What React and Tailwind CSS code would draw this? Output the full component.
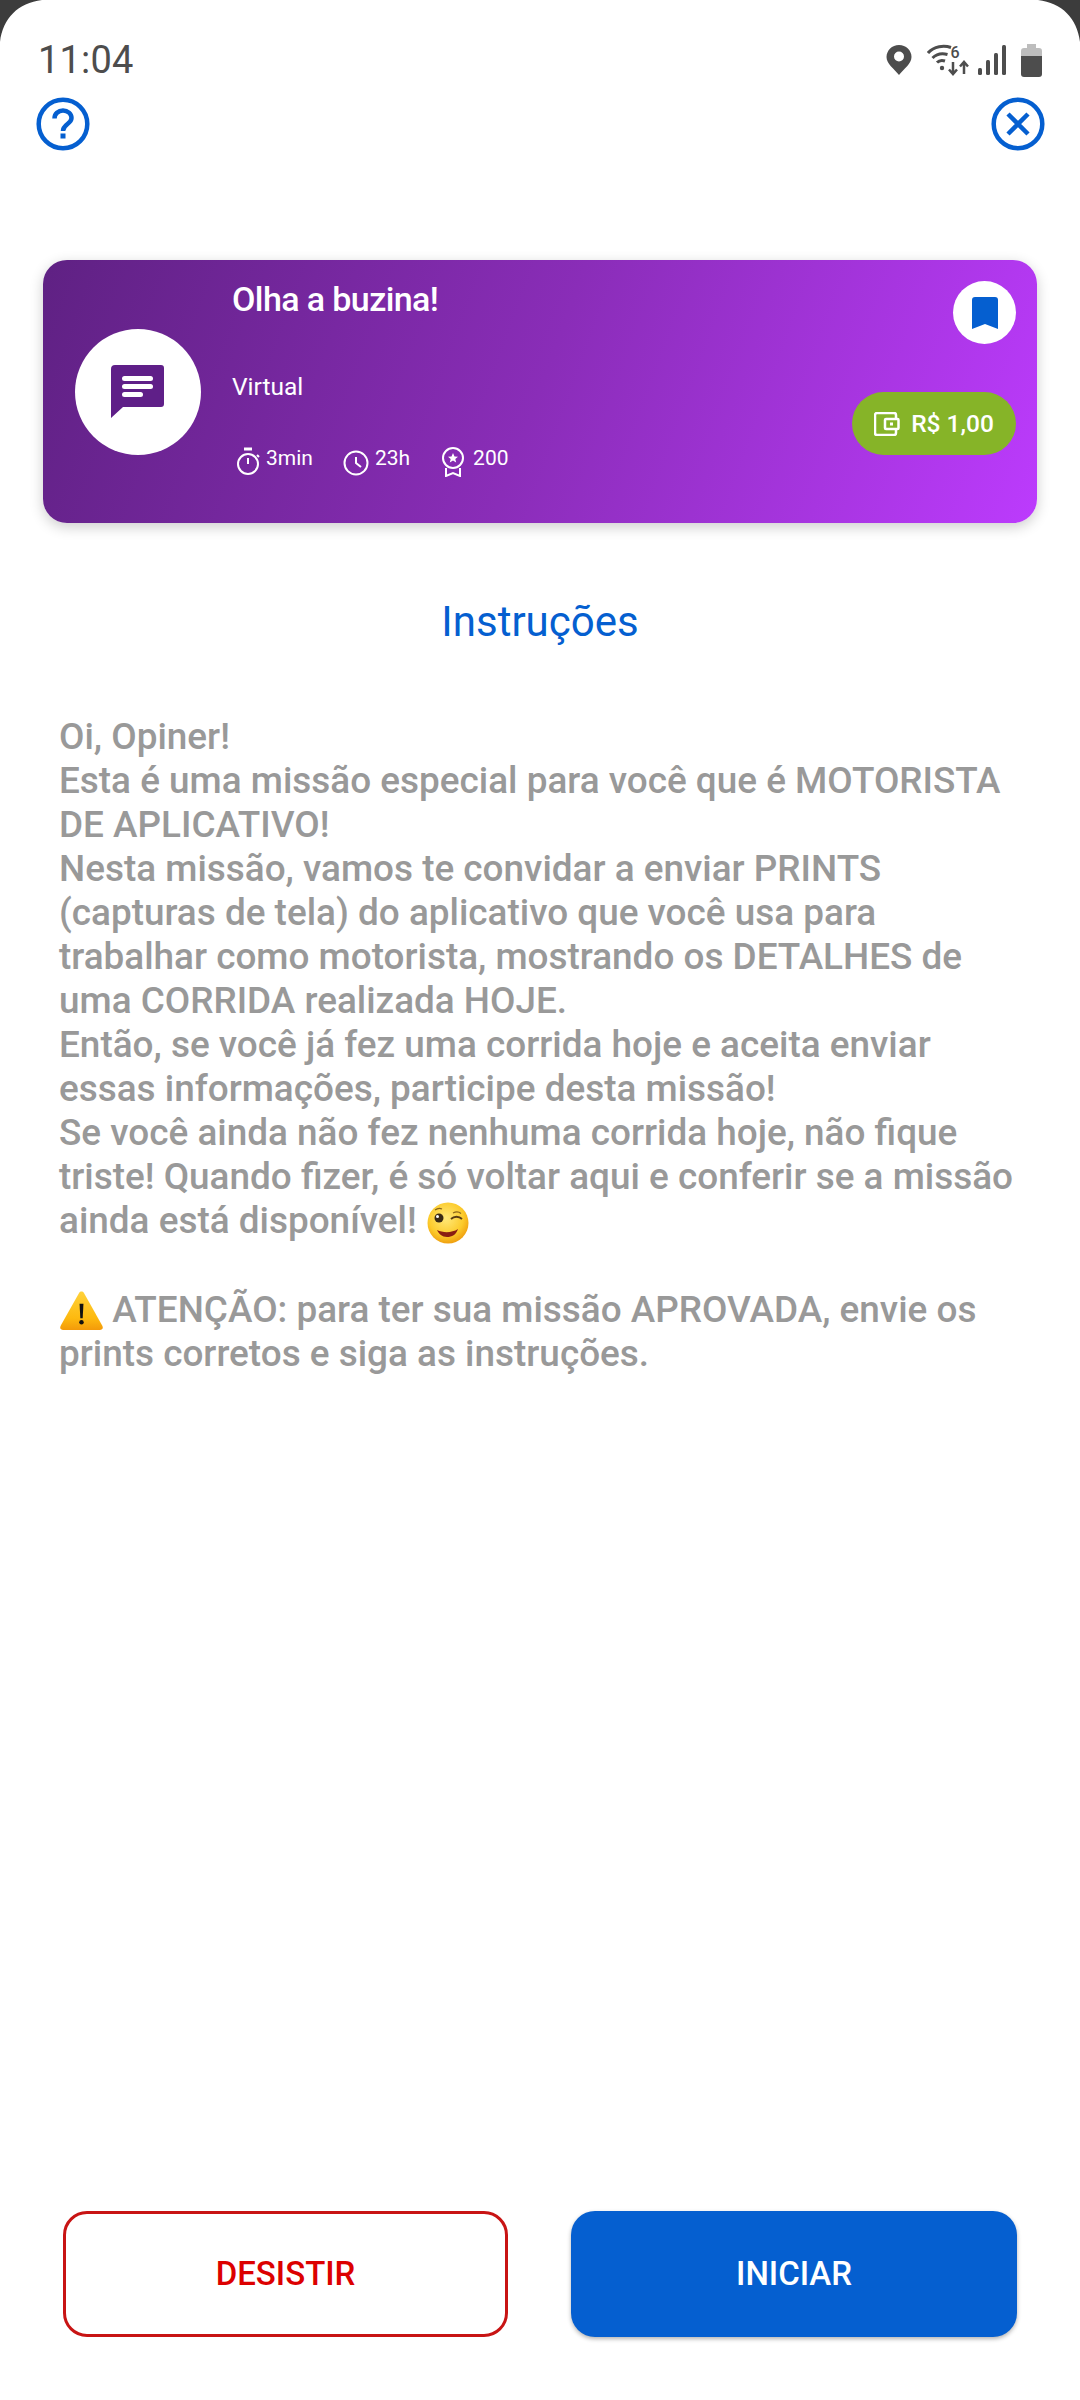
const BLUE = "#055FD0";
const Q = () => (
  <svg width="54" height="54" viewBox="0 0 54 54" fill="none"><circle cx="27" cy="27" r="24.300" stroke={BLUE} strokeWidth="4.500"/><path d="M18.500 21.500c0-4.700 3.800-8 8.500-8s8.500 3.300 8.500 7.500c0 6-8.500 6-8.500 13" stroke={BLUE} strokeWidth="4.500"/><rect x="24.500" y="36.500" width="5" height="5" fill={BLUE}/></svg>
);
const X = () => (
  <svg width="54" height="54" viewBox="0 0 54 54" fill="none"><circle cx="27" cy="27" r="24.300" stroke={BLUE} strokeWidth="4.500"/><path d="M17 17l20 20M37 17L17 37" stroke={BLUE} strokeWidth="4.500"/></svg>
);
const StatusIcons = () => (
  <div className="flex items-center">
    <svg width="26" height="32" viewBox="0 0 26 32"><path fillRule="evenodd" d="M13 1C6 1 .5 6.500.5 13c0 7 7.500 11.500 12.500 18 5-6.500 12.500-11 12.500-18C25.500 6.500 20 1 13 1zm0 16.500a5 5 0 1 1 0-10 5 5 0 0 1 0 10z" fill="#4d4d4d"/></svg>
    <svg width="43" height="32" viewBox="0 0 43 32" fill="none" className="ml-[15px]"><path d="M1 9C7 2 17 1 24 3.500M5.500 14C10 9.500 15 9 20.500 10.500M10 18.500c2-2 5-2.500 8-1.500" stroke="#4d4d4d" strokeWidth="3"/><circle cx="15" cy="24" r="2.200" fill="#4d4d4d"/><path d="M26 18v12M22 25.500l4 4.500 4-4.500M37 30V18M33 22.500l4-4.500 4 4.500" stroke="#4d4d4d" strokeWidth="2.500"/><text x="23.500" y="14" fontSize="16" fontWeight="500" fontFamily="Roboto" fill="#4d4d4d">6</text></svg>
    <svg width="28" height="30" viewBox="0 0 28 30" fill="#4d4d4d" className="ml-[8px]"><rect x="0" y="23" width="4" height="7" rx="1.500"/><rect x="8" y="15" width="4" height="15" rx="1.500"/><rect x="16" y="8" width="4" height="22" rx="1.500"/><rect x="24" y="0" width="4" height="30" rx="1.500"/></svg>
    <svg width="21" height="33" viewBox="0 0 21 33" className="ml-[15px]"><path d="M6 0h9v4h3a3 3 0 0 1 3 3v7H0V7a3 3 0 0 1 3-3h3z" fill="#bdbdbd"/><path d="M0 12h21v18a3 3 0 0 1-3 3H3a3 3 0 0 1-3-3z" fill="#4d4d4d"/></svg>
  </div>
);
const Stat = ({ icon, label, cls }) => (
  <div className={`flex items-start ${cls}`}>
    {icon}
    <span className="text-[21px] leading-[24px] -mt-[1px]">{label}</span>
  </div>
);
const Wink = () => (
  <svg width="44" height="42" viewBox="0 0 44 42" className="inline-block align-[-11px]">
    <defs><radialGradient id="wk" cx="45%" cy="38%" r="65%"><stop offset="0%" stopColor="#FFE97A"/><stop offset="65%" stopColor="#FCCB2C"/><stop offset="100%" stopColor="#EE9A0C"/></radialGradient></defs>
    <circle cx="22" cy="21" r="20.500" fill="url(#wk)"/>
    <circle cx="13" cy="16" r="4.500" fill="#3a2a14"/><circle cx="11.500" cy="14.500" r="1.500" fill="#fff"/>
    <path d="M25 17c3-3 8-3 11 0" stroke="#5a3c12" strokeWidth="1.800" fill="none"/><path d="M27 11c3-1.500 6-1.200 8 .5" stroke="#8a6418" strokeWidth="1.200" fill="none"/><path d="M9 8c2-1.500 5-2 7-1" stroke="#8a6418" strokeWidth="1.200" fill="none"/>
    <path d="M11 28c6 3 15 3 21-1-2 6-6 8-11 8s-8-3-10-7z" fill="#8a1d12"/>
  </svg>
);
const Warn = () => (
  <svg width="45" height="39" viewBox="0 0 44 40" className="inline-block align-[-8px] -mr-[1px]">
    <defs><linearGradient id="wn" x1="0" y1="0" x2="0" y2="1"><stop offset="0%" stopColor="#FFD23A"/><stop offset="70%" stopColor="#FDB90F"/><stop offset="100%" stopColor="#F39A0A"/></linearGradient></defs>
    <path d="M19.500 2c1.300-2 3.700-2 5 0L43.500 36c1 2 0 4-2.500 4H3C.5 40-.5 38 .5 36z" fill="url(#wn)"/>
    <path d="M20 13h4l-.8 15h-2.400z" fill="#111"/><circle cx="22" cy="32" r="2.300" fill="#111"/>
  </svg>
);
const para = [
  "Oi, Opiner!",
  "Esta é uma missão especial para você que é MOTORISTA DE APLICATIVO!",
  "Nesta missão, vamos te convidar a enviar PRINTS (capturas de tela) do aplicativo que você usa para trabalhar como motorista, mostrando os DETALHES de uma CORRIDA realizada HOJE.",
  "Então, se você já fez uma corrida hoje e aceita enviar essas informações, participe desta missão!",
];
export default function App() {
  return (
    <div className="relative w-[1080px] h-[2400px] bg-white overflow-hidden flex flex-col" style={{ fontFamily: "Roboto, sans-serif" }}>
      <div className="absolute inset-x-0 top-0 h-[44px] pointer-events-none">
        <svg width="1080" height="44" viewBox="0 0 1080 44"><path d="M0 0h42C18 3 3 18 0 42zM1080 0h-42c24 3 39 18 42 42z" fill="#3c3c3c"/></svg>
      </div>
      <div className="flex items-center justify-between h-[46px] mt-[37px] pl-[38px] pr-[38px]">
        <span className="text-[38px] leading-[46px] text-[#4d4d4d] tracking-[0.2px]">11:04</span>
        <StatusIcons />
      </div>
      <div className="flex justify-between pl-[36px] pr-[35px] mt-[14px]">
        <Q /><X />
      </div>
      <div className="relative mx-[43px] mt-[109px] h-[263px] rounded-[24px] shadow-[0_4px_14px_rgba(0,0,0,0.2)] bg-[linear-gradient(110deg,#5F2183_0%,#8A2DB8_50%,#BC3BFD_100%)] text-white flex">
        <div className="ml-[32px] mt-[69px] w-[126px] h-[126px] rounded-full bg-white flex items-center justify-center shrink-0">
          <svg width="54" height="54" viewBox="0 0 54 54"><path d="M4 0h46a3 3 0 0 1 3 3v36a3 3 0 0 1-3 3H12L0 53V4a4 4 0 0 1 4-4z" fill="#5F1F88"/><rect x="11" y="11" width="31" height="5" rx="2.500" fill="#fff"/><rect x="11" y="19" width="31" height="5" rx="2.500" fill="#fff"/><rect x="11" y="27" width="21" height="5" rx="2.500" fill="#fff"/></svg>
        </div>
        <div className="ml-[31px] flex-1 flex flex-col">
          <div className="text-[34px] leading-[40px] font-medium mt-[20px] tracking-[-0.6px] -translate-y-px">Olha a buzina!</div>
          <div className="text-[24.500px] leading-[30px] mt-[52px]">Virtual</div>
          <div className="flex mt-[45px]">
            <Stat cls="" label="3min" icon={<svg width="26" height="30" viewBox="0 0 26 30" fill="none" className="ml-[3px] mr-[5px]" stroke="#fff" strokeWidth="2"><path d="M9 2h8" strokeWidth="3"/><circle cx="13" cy="17" r="10"/><path d="M13 11v6M22 8l2 2"/></svg>} />
            <Stat cls="ml-[30px]" label="23h" icon={<svg width="26" height="28" viewBox="0 0 26 28" fill="none" className="mt-[2px] mr-[6px]" stroke="#fff" strokeWidth="2"><circle cx="13" cy="14" r="11.500"/><path d="M13 8v6l5 4"/></svg>} />
            <Stat cls="ml-[31px]" label="200" icon={<svg width="24" height="30" viewBox="0 0 24 30" fill="none" className="mr-[8px]" stroke="#fff" strokeWidth="2"><circle cx="12" cy="11" r="10"/><path d="M12 6l1.500 3.500 3.500.3-2.700 2.200.9 3.500-3.200-2-3.200 2 .9-3.500L7 9.800l3.500-.3z" fill="#fff" stroke="none"/><path d="M5 21v8l7-3 7 3v-8"/></svg>} />
          </div>
        </div>
        <div className="absolute top-[21px] right-[21px] w-[63px] h-[63px] rounded-full bg-white flex items-center justify-center">
          <svg width="26" height="32" viewBox="0 0 26 32"><path d="M3 0h20a3 3 0 0 1 3 3v29l-13-5-13 5V3a3 3 0 0 1 3-3z" fill={BLUE}/></svg>
        </div>
        <div className="absolute top-[132px] right-[21px] w-[164px] h-[63px] rounded-full bg-[#86B428] flex items-center justify-center">
          <svg width="26" height="24" viewBox="0 0 26 24" fill="none" stroke="#fff" strokeWidth="2.500" className="mr-[11px]"><path d="M22 7V3a2 2 0 0 0-2-2H3a2 2 0 0 0-2 2v18a2 2 0 0 0 2 2h17a2 2 0 0 0 2-2v-4"/><rect x="11" y="7" width="13.500" height="10" rx="1"/><rect x="16" y="10.500" width="3" height="3" fill="#fff" stroke="none"/></svg>
          <span className="text-[24.500px] leading-[28px] font-medium">R$ 1,00</span>
        </div>
      </div>
      <div className="mt-[74px] text-center text-[#055FD0] text-[42px] leading-[50px]">Instruções</div>
      <div className="mt-[68px] pl-[59px] pr-[59px] text-[36.900px] leading-[44px] font-medium text-[#999999]">
        {para.map((p, i) => <div key={i}>{p}</div>)}
        <div>Se você ainda não fez nenhuma corrida hoje, não fique triste! Quando fizer, é só voltar aqui e conferir se a missão ainda está disponível! <Wink /></div>
        <div className="h-[44px]" />
        <div><Warn /> ATENÇÃO: para ter sua missão APROVADA, envie os prints corretos e siga as instruções.</div>
      </div>
      <div className="absolute left-[63px] right-[63px] top-[2211px] flex justify-between">
        <button className="w-[445px] h-[126px] rounded-[24px] border-[3px] border-[#C81414] bg-white text-[#DC0000] text-[33px] font-medium">DESISTIR</button>
        <button className="w-[446px] h-[126px] rounded-[24px] bg-[#055FD0] text-white text-[33px] font-medium shadow-[0_2px_4px_rgba(0,0,0,0.3)]">INICIAR</button>
      </div>
    </div>
  );
}
